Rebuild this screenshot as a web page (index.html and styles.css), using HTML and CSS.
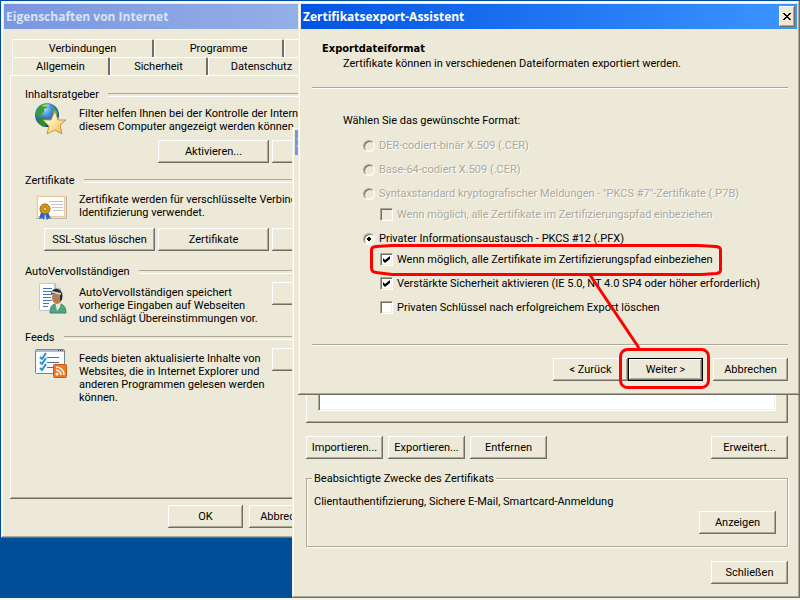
FILE: index.html
```
<!DOCTYPE html>
<html lang="de">
<head>
    <meta charset="UTF-8">
    <meta name="viewport" content="width=device-width, initial-scale=1.0">
    <title>Zertifikatsexport-Assistent</title>
    <link rel="stylesheet" href="styles.css">
</head>
<body>
    <main class="desktop">
        <section class="window window-options">
            <header class="titlebar inactive">
                <h1>Eigenschaften von Internet</h1>
            </header>
            <div class="options-body">
                <nav class="tabs">
                    <div class="tab-row back">
                        <button class="tab">Verbindungen</button>
                        <button class="tab">Programme</button>
                        <button class="tab"></button>
                    </div>
                    <div class="tab-row">
                        <button class="tab">Allgemein</button>
                        <button class="tab">Sicherheit</button>
                        <button class="tab wide">Datenschutz</button>
                    </div>
                </nav>
                <div class="panel">
                    <section class="group">
                        <h2>Inhaltsratgeber</h2>
                        <div class="group-body">
                            <svg class="icon" viewBox="0 0 32 32">
                                <defs>
                                    <radialGradient id="ocean" cx="0.4" cy="0.25" r="0.8">
                                        <stop offset="0" stop-color="#a9e0ff"/>
                                        <stop offset="0.4" stop-color="#3c87dc"/>
                                        <stop offset="1" stop-color="#0c2a86"/>
                                    </radialGradient>
                                    <linearGradient id="gold" x1="0" y1="0" x2="1" y2="1">
                                        <stop offset="0.3" stop-color="#fff6cf"/>
                                        <stop offset="1" stop-color="#f0b63a"/>
                                    </linearGradient>
                                </defs>
                                <circle cx="12" cy="12" r="12" fill="url(#ocean)"/>
                                <path d="M2 6 Q6 0 12 1 L13 4 L9 6 L9 9 L6 11 L5 14 L1 12 Z" fill="#3f9a35"/>
                                <path d="M4 15 L9 14 L13 17 L12 22 L9 24 Q3 21 2 16 Z" fill="#2f8b2c"/>
                                <path d="M17 3 Q22 6 23 11 L20 13 L17 9 L18 6 Z" fill="#4aa63c"/>
                                <path d="M6 3 Q10 0 15 2 L12 4 Z" fill="#b6ef9c" opacity="0.7"/>
                                <path d="M20 8 L23 17 L31 17 L25 22 L27 31 L20 27 L12 31 L14 23 L8 17 L16 17 Z" fill="url(#gold)" stroke="#c9953a"/>
                            </svg>
                            <p>Filter helfen Ihnen bei der Kontrolle der Internetinhalte,<br>diesem Computer angezeigt werden können.</p>
                        </div>
                        <div class="group-buttons">
                            <button class="btn">Aktivieren...</button>
                            <button class="btn"></button>
                        </div>
                    </section>

                    <section class="group certificates">
                        <h2>Zertifikate</h2>
                        <div class="group-body">
                            <svg class="icon" viewBox="0 0 32 32">
                                <rect x="1" y="3" width="31" height="23" fill="#b8b4a8"/>
                                <rect x="1" y="2" width="30" height="23" fill="#f7dfb6"/>
                                <rect x="2.5" y="3.5" width="27" height="20" fill="#fffefb" stroke="#dfa35c" stroke-dasharray="1 1"/>
                                <path d="M14 8.5 H28 M16 11.5 H28 M17 14.5 H28 M18 17.5 H28" stroke="#c3c3cc"/>
                                <path d="M6 19 L4 26 L7 25 L9 27 L10 21 L12 27 L14 25 L16 26 L13 19 Z" fill="#2468d8"/>
                                <circle cx="10" cy="16" r="5" fill="#d99b12" stroke="#94640a"/>
                                <circle cx="10" cy="16" r="2" fill="#f5cf55" stroke="#a8740f"/>
                            </svg>
                            <p>Zertifikate werden für verschlüsselte Verbindungen<br>Identifizierung verwendet.</p>
                        </div>
                        <div class="group-buttons">
                            <button class="btn">SSL-Status löschen</button>
                            <button class="btn">Zertifikate</button>
                            <button class="btn"></button>
                        </div>
                    </section>

                    <section class="group side-button">
                        <h2>AutoVervollständigen</h2>
                        <div class="group-body">
                            <svg class="icon" viewBox="0 0 32 32">
                                <path d="M4.5 1.5 H20 L25.5 7 V28.5 H4.5 Z" fill="#fbfcfe" stroke="#c3c9d2"/>
                                <path d="M20 1.5 V7 H25.5" fill="#dfe4ea" stroke="#8e979f"/>
                                <path d="M8 6.5 H17 M8 9.5 H17 M8 12.5 H17 M8 15.5 H16 M8 18.5 H17 M8 21.5 H14 M8 24.5 H13" stroke="#4478bb"/>
                                <path d="M15 31 Q15 23 20 22 L26 22 Q31 24 31 31 Z" fill="#4fa583" stroke="#3b8568"/>
                                <path d="M20 20 H26 L25 25 L22 29 Z" fill="#efe3d2"/>
                                <ellipse cx="22" cy="15" rx="5" ry="7" fill="#b57d50"/>
                                <path d="M16 12 Q17 6 23 7 Q29 9 27 18 L25 19 L25 12 Z" fill="#2e2a2a"/>
                                <path d="M17 10 L26 12" stroke="#c9ced3" stroke-width="2"/>
                            </svg>
                            <p>AutoVervollständigen speichert<br>vorherige Eingaben auf Webseiten<br>und schlägt Übereinstimmungen vor.</p>
                            <button class="btn"></button>
                        </div>
                    </section>

                    <section class="group side-button">
                        <h2>Feeds</h2>
                        <div class="group-body">
                            <svg class="icon" viewBox="0 0 32 32">
                                <rect x="0.5" y="1.5" width="29" height="24" rx="1" fill="#fafcff" stroke="#75828f"/>
                                <path d="M1 3 H29" stroke="#aeb9cc" stroke-width="2"/>
                                <path d="M23 2.5 H24 M25 2.5 H26 M27 2.5 H28" stroke="#445"/>
                                <path d="M12 9.5 H24 M12 14.5 H24 M12 19.5 H18" stroke="#5c6c87"/>
                                <path d="M5 9 L7 11 L11 5 M5 14 L7 16 L11 10 M5 20 L7 22 L11 16" fill="none" stroke="#2592cf" stroke-width="2"/>
                                <rect x="18.5" y="16.5" width="13" height="13" rx="1" fill="#ee7a23" stroke="#cb5a10"/>
                                <circle cx="22" cy="26" r="1.5" fill="#fff"/>
                                <path d="M21 22 A5 5 0 0 1 26 27 M21 19 A8 8 0 0 1 29 27" fill="none" stroke="#fff" stroke-width="1.5"/>
                            </svg>
                            <p>Feeds bieten aktualisierte Inhalte von<br>Websites, die in Internet Explorer und<br>anderen Programmen gelesen werden<br>können.</p>
                            <button class="btn"></button>
                        </div>
                    </section>
                </div>
                <footer class="options-footer">
                    <button class="btn">OK</button>
                    <button class="btn">Abbrechen</button>
                </footer>
            </div>
        </section>

        <section class="window window-certs">
            <header class="titlebar inactive">
                <h1>Zertifikate</h1>
            </header>
            <div class="certs-body">
                <div class="list-panel">
                    <div class="list"></div>
                </div>
                <div class="cert-buttons">
                    <button class="btn">Importieren...</button>
                    <button class="btn">Exportieren...</button>
                    <button class="btn">Entfernen</button>
                    <button class="btn advanced">Erweitert...</button>
                </div>
                <fieldset class="purposes">
                    <legend>Beabsichtigte Zwecke des Zertifikats</legend>
                    <p>Clientauthentifizierung, Sichere E-Mail, Smartcard-Anmeldung</p>
                    <button class="btn">Anzeigen</button>
                </fieldset>
                <button class="btn close-certs">Schließen</button>
            </div>
        </section>

        <section class="window window-wizard">
            <header class="titlebar">
                <h1>Zertifikatsexport-Assistent</h1>
                <button class="close" aria-label="Schließen">
                    <svg viewBox="0 0 8 7"><path d="M0 0h2v1h1v1h2v-1h1v-1h2v1h-1v1h-1v1h-1v1h1v1h1v1h1v1h-2v-1h-1v-1h-2v1h-1v1h-2v-1h1v-1h1v-1h1v-1h-1v-1h-1v-1h-1z"/></svg>
                </button>
            </header>
            <form class="wizard-body">
                <h2>Exportdateiformat</h2>
                <p class="subtitle">Zertifikate können in verschiedenen Dateiformaten exportiert werden.</p>
                <hr>
                <p class="question">Wählen Sie das gewünschte Format:</p>
                <div class="choices">
                    <label class="option disabled"><input type="radio" name="format" disabled>DER-codiert-binär X.509 (.CER)</label>
                    <label class="option disabled"><input type="radio" name="format" disabled>Base-64-codiert X.509 (.CER)</label>
                    <label class="option disabled"><input type="radio" name="format" disabled>Syntaxstandard kryptografischer Meldungen - "PKCS #7"-Zertifikate (.P7B)</label>
                    <label class="option sub first disabled"><input type="checkbox" disabled>Wenn möglich, alle Zertifikate im Zertifizierungspfad einbeziehen</label>
                    <label class="option"><input type="radio" name="format" checked>Privater Informationsaustausch - PKCS #12 (.PFX)</label>
                    <label class="option sub first"><input type="checkbox" checked>Wenn möglich, alle Zertifikate im Zertifizierungspfad einbeziehen</label>
                    <label class="option sub"><input type="checkbox" checked>Verstärkte Sicherheit aktivieren (IE 5.0, NT 4.0 SP4 oder höher erforderlich)</label>
                    <label class="option sub"><input type="checkbox">Privaten Schlüssel nach erfolgreichem Export löschen</label>
                </div>
                <hr>
                <div class="wizard-buttons">
                    <button type="button" class="btn">&lt; Zurück</button>
                    <button type="button" class="btn default">Weiter &gt;</button>
                    <button type="button" class="btn cancel">Abbrechen</button>
                </div>
            </form>
            <svg class="marker" viewBox="0 0 344 148">
                <path d="M24 3.5 H330 L348 4.5 Q352.500 5 352.500 8 V28 Q352.500 31 348 31.500 L334 32.500 H24 L8 30.500 Q3.500 30 3.500 26 V8 Q3.500 5 8 4.500 Z"/>
                <path d="M222 33 L271 106"/>
                <rect x="252.500" y="107.500" width="88" height="38" rx="7"/>
            </svg>
        </section>
    </main>
</body>
</html>
```

FILE: styles.css
```
:root {
    --face: #ECE9D8;
    --light: #FFFFFF;
    --shadow: #ACA899;
    --dark: #716F64;
    --desktop: #004E98;
}

* {
    box-sizing: border-box;
}

body {
    margin: 0;
    font-family: Tahoma, Roboto, sans-serif;
    font-size: 11px;
    line-height: 13px;
    color: #000;
    background-color: var(--desktop);
}

h1, h2, p {
    margin: 0;
    font-size: 11px;
    font-weight: normal;
}

.desktop {
    position: relative;
    height: 100vh;
    min-height: 600px;
    overflow: hidden;
    border-bottom: 2px solid #F4F3EC;
}

/* Windows */
.window {
    position: absolute;
    display: flex;
    flex-direction: column;
    padding: 3px;
    background-color: var(--face);
    box-shadow: inset -1px -1px var(--dark), inset 1px 1px #F1EFE2, inset -2px -2px var(--shadow), inset 2px 2px var(--light);
}

.window-options {
    left: 1px;
    top: 1px;
    width: 411px;
}

.window-certs {
    left: 292px;
    right: 0;
    top: 127px;
    bottom: 0;
}

.window-wizard {
    left: 298px;
    right: 0;
    top: 1px;
}

.titlebar {
    display: flex;
    align-items: center;
    justify-content: space-between;
    height: 25px;
    padding: 0 2px;
    background: linear-gradient(to right, #0054E3, #3D95FF);
    color: #fff;
}

.titlebar.inactive {
    background: linear-gradient(to right, #7A96DF, #9DB9EB);
    color: #D8E4F8;
}

.titlebar h1 {
    font-family: "Trebuchet MS", "Open Sans", sans-serif;
    font-size: 12px;
    font-weight: bold;
}

.close {
    display: flex;
    align-items: center;
    justify-content: center;
    width: 16px;
    height: 21px;
    padding: 0;
    border: none;
    background-color: var(--face);
    box-shadow: inset -1px -1px var(--dark), inset 1px 1px var(--light), inset -2px -2px var(--shadow);
}

.close svg {
    width: 8px;
    height: 7px;
    shape-rendering: crispEdges;
}

/* Buttons */
.btn {
    flex: none;
    width: 77px;
    height: 23px;
    padding: 0;
    border: none;
    font: inherit;
    color: #000;
    white-space: nowrap;
    background-color: var(--face);
    box-shadow: inset -1px -1px var(--dark), inset 1px 1px var(--light), inset -2px -2px var(--shadow);
}

.btn.default {
    border: 1px solid #000;
}

/* Internet options */
.options-body {
    padding: 10px 4px 7px 6px;
}

.tab-row {
    display: flex;
    height: 18px;
    padding-left: 2px;
}

.tab {
    flex: none;
    width: 98px;
    padding: 0;
    border: 1px solid var(--light);
    border-right: 2px solid var(--dark);
    border-bottom: none;
    border-radius: 2px 2px 0 0;
    font: inherit;
    color: #000;
    background-color: var(--face);
}

.tab-row.back .tab {
    width: 130px;
}

.tab-row.back .tab:first-child {
    width: 142px;
}

.tab.wide {
    width: 108px;
}

.panel {
    height: 424px;
    padding: 13px 22px 0 15px;
    box-shadow: inset -1px -1px var(--dark), inset 1px 1px var(--light), inset -2px -2px var(--shadow);
}

.group {
    margin-bottom: 11px;
}

.group h2 {
    display: flex;
    align-items: center;
    gap: 9px;
}

.group h2::after {
    content: "";
    flex: 1;
    height: 2px;
    border-top: 1px solid var(--shadow);
    border-bottom: 1px solid var(--light);
}

.group-body {
    display: flex;
    align-items: flex-start;
    gap: 12px;
    padding-left: 10px;
}

.group-body p {
    margin-top: 6px;
    flex: none;
    white-space: nowrap;
}

.group .btn {
    width: 111px;
}

.group-body .btn {
    margin-top: 2px;
}

.icon {
    flex: none;
    width: 32px;
    height: 32px;
    margin-top: 2px;
}

.group-buttons {
    display: flex;
    justify-content: flex-end;
    gap: 3px;
    margin-top: 5px;
}

.certificates {
    margin-bottom: 14px;
}

.certificates .icon {
    margin-top: 6px;
}

.certificates .group-buttons {
    margin-top: 3px;
}

.side-button {
    margin-bottom: 6px;
}

.side-button .group-body {
    margin-top: 2px;
}

.side-button p {
    width: 181px;
}

.options-footer {
    display: flex;
    justify-content: flex-end;
    gap: 6px;
    padding: 6px 81px 0 0;
}

.options-footer .btn {
    width: 75px;
}

/* Certificates */
.certs-body {
    flex: 1;
    display: flex;
    flex-direction: column;
    padding: 10px 9px 11px 11px;
}

.list-panel {
    flex: 1;
    display: flex;
    padding: 12px;
    box-shadow: inset -1px -1px var(--dark), inset 1px 1px var(--light), inset -2px -2px var(--shadow);
}

.list {
    flex: 1;
    background-color: #fff;
    border: 1px solid var(--shadow);
    border-right-color: var(--light);
    border-bottom-color: var(--light);
    box-shadow: inset 1px 1px var(--dark), inset -1px -1px #F1EFE2;
}

.cert-buttons {
    display: flex;
    gap: 5px;
    margin-top: 13px;
}

.advanced {
    margin-left: auto;
}

.purposes {
    display: flex;
    flex-direction: column;
    margin: 13px 0 14px;
    padding: 10px 11px 12px 7px;
    border: 1px solid var(--shadow);
    box-shadow: 1px 1px var(--light), inset 1px 1px var(--light);
}

.purposes legend {
    margin-left: -2px;
    padding: 0 2px;
    background-color: var(--face);
}

.purposes .btn {
    align-self: flex-end;
    margin-top: 3px;
}

.close-certs {
    align-self: flex-end;
}

/* Export wizard */
.wizard-body {
    padding: 12px 9px 11px 11px;
}

.wizard-body h2 {
    padding-left: 10px;
    font-family: "DejaVu Sans Condensed", "DejaVu Sans", sans-serif;
    font-weight: bold;
    line-height: 15px;
}

.subtitle {
    padding-left: 31px;
    line-height: 15px;
}

.wizard-body hr {
    height: 2px;
    margin: 16px 0 25px;
    border: none;
    border-top: 1px solid var(--shadow);
    border-bottom: 1px solid var(--light);
}

.question {
    padding-left: 31px;
}

.choices {
    padding-top: 1px;
}

.option {
    display: flex;
    align-items: center;
    gap: 4px;
    margin-top: 11px;
    padding-left: 51px;
    white-space: nowrap;
}

.option.sub {
    padding-left: 68px;
}

.option.first {
    margin-top: 8px;
}

.option.disabled {
    color: var(--shadow);
    text-shadow: 1px 1px var(--light);
}

.option input {
    appearance: none;
    flex: none;
    width: 13px;
    height: 13px;
    margin: 0;
    background-color: #fff;
    border: 1px solid var(--shadow);
    border-right-color: var(--light);
    border-bottom-color: var(--light);
    box-shadow: inset 1px 1px var(--dark), inset -1px -1px #F1EFE2;
}

.option input[type="radio"] {
    width: 12px;
    height: 12px;
    border-radius: 50%;
}

.option input:disabled {
    background-color: var(--face);
}

.option input[type="radio"]:checked {
    background-image: radial-gradient(circle, #000 2px, transparent 2px);
}

.option input[type="checkbox"]:checked::before {
    content: "";
    display: block;
    width: 7px;
    height: 7px;
    margin: 2px;
    background-color: #000;
    clip-path: polygon(0 2px, 2px 4px, 7px 0, 7px 3px, 2px 7px, 0 5px);
}

.wizard-body .choices + hr {
    margin: 30px 0 12px;
}

.wizard-buttons {
    display: flex;
    justify-content: flex-end;
}

.wizard-buttons .btn {
    width: 75px;
}

.wizard-buttons .cancel {
    margin-left: 10px;
}

/* Red pen marks over the wizard */
.marker {
    position: absolute;
    left: 70px;
    top: 241px;
    width: 344px;
    height: 148px;
    overflow: visible;
    pointer-events: none;
    fill: none;
    stroke: #FF0000;
    stroke-width: 3px;
}
```
